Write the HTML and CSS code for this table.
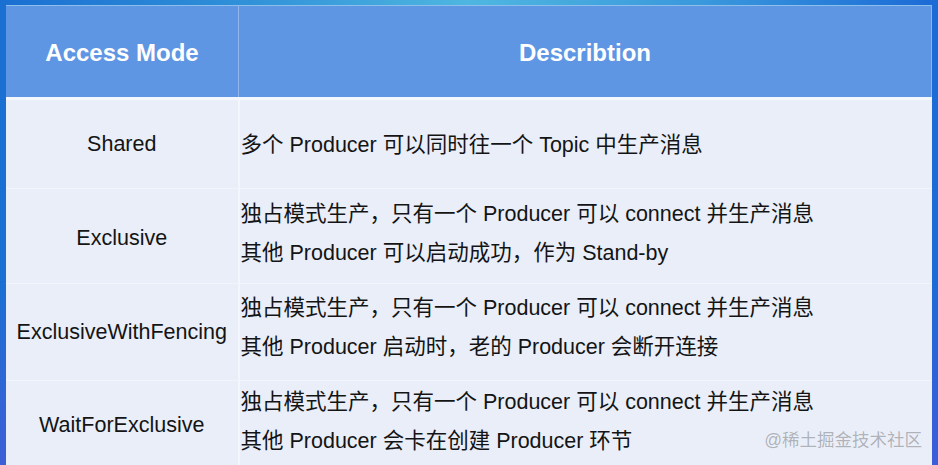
FILE: index.html
```html
<!DOCTYPE html>
<html lang="zh-CN">
<head>
<meta charset="utf-8">
<title>Access Mode</title>
<link rel="stylesheet" href="styles.css">
</head>
<body>
<div class="frame">
  <table class="modes">
    <thead>
      <tr>
        <th class="col-mode">Access Mode</th>
        <th class="col-desc">Describtion</th>
      </tr>
    </thead>
    <tbody>
      <tr class="row row-1">
        <td class="mode">Shared</td>
        <td class="desc desc-single">多个 Producer 可以同时往一个 Topic 中生产消息</td>
      </tr>
      <tr class="row row-2">
        <td class="mode">Exclusive</td>
        <td class="desc">独占模式生产，只有一个 Producer 可以 connect 并生产消息<br>其他 Producer 可以启动成功，作为 Stand-by</td>
      </tr>
      <tr class="row row-3">
        <td class="mode">ExclusiveWithFencing</td>
        <td class="desc">独占模式生产，只有一个 Producer 可以 connect 并生产消息<br>其他 Producer 启动时，老的 Producer 会断开连接</td>
      </tr>
      <tr class="row row-4">
        <td class="mode">WaitForExclusive</td>
        <td class="desc">独占模式生产，只有一个 Producer 可以 connect 并生产消息<br>其他 Producer 会卡在创建 Producer 环节</td>
      </tr>
    </tbody>
  </table>
  <div class="watermark">@稀土掘金技术社区</div>
</div>
</body>
</html>
```

FILE: styles.css
```css
html, body {
  margin: 0;
  padding: 0;
}

body {
  width: 938px;
  height: 465px;
  overflow: hidden;
  background: linear-gradient(90deg, #1a6fd2 0%, #2f8fd8 25%, #4fb6e0 50%, #3a98dc 75%, #1b6ad6 100%);
  font-family: "Liberation Sans", Arial, "Noto Sans CJK SC", sans-serif;
}

.frame {
  position: relative;
  height: 465px;
  padding: 5px 6px 0 6px;
  box-sizing: border-box;
  background: linear-gradient(180deg, rgba(0,0,0,0) 0%, rgba(0,0,0,0) 60%, rgba(90,80,220,0.55) 100%);
}

.modes {
  width: 926px;
  border-collapse: collapse;
  table-layout: fixed;
  border-top: 1px solid #8cc0ea;
}

.col-mode {
  width: 232px;
}

thead th {
  height: 88px;
  padding: 3px 0 0 0;
  background: #5f96e4;
  color: #ffffff;
  font-size: 24px;
  font-weight: bold;
  text-align: center;
  vertical-align: middle;
  border-bottom: 3px solid #f4f7fd;
}

thead th.col-mode {
  border-right: 1px solid #92b8ef;
}

thead th.col-desc {
  border-right: 1px solid #8fb3ea;
}

tbody td {
  padding: 0;
  background: #e9eef9;
  color: #141414;
  font-size: 21.5px;
  vertical-align: middle;
  border-bottom: 1px solid #f2f5fc;
}

td.mode {
  text-align: center;
  border-right: 2px solid #f3f6fc;
}

td.desc {
  text-align: left;
  padding-left: 1px;
  line-height: 39px;
  padding-bottom: 8px;
}

td.desc-single {
  padding-bottom: 0;
  padding-top: 2px;
}

.row-1 { height: 90px; }
.row-2 { height: 95px; }
.row-3 { height: 97px; }
.row-4 { height: 90px; }

.row-2 td.mode {
  padding-top: 5px;
}

.row-2 td.desc {
  padding-bottom: 4px;
}

.row-3 td.desc {
  padding-bottom: 9px;
}

.watermark {
  position: absolute;
  right: 16px;
  top: 428px;
  font-size: 17.5px;
  line-height: 24px;
  color: #aeb2ba;
  text-shadow: 0 0 1px #ffffff;
}
```
